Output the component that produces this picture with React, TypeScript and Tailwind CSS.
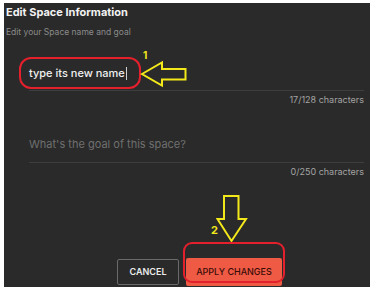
import React from "react";

const LeftArrow = () => (
  <svg width="48" height="28" viewBox="0 0 48 28" className="absolute left-[136px] top-[57px]">
    <path
      d="M2 14 L22 2.5 L22 9 L45.5 9 L45.5 19.5 L22 19.5 L22 25.5 Z"
      fill="none"
      stroke="#f3e81a"
      strokeWidth="2"
      strokeLinejoin="miter"
    />
  </svg>
);

const DownArrow = () => (
  <svg width="32" height="50" viewBox="0 0 32 50" className="absolute left-[212px] top-[191px]">
    <path
      d="M8 2 L22.5 2 L22.5 25 L30 25 L15.5 47 L1.5 25 L8 25 Z"
      fill="none"
      stroke="#f3e81a"
      strokeWidth="2"
      strokeLinejoin="miter"
    />
  </svg>
);

const App = () => {
  return (
    <div className="w-[374px] h-[294px] bg-white pt-[3px] pl-[4px] font-['Inter',sans-serif]">
      <div className="relative w-[366px] h-[284px] bg-[#2a2a2a] flex flex-col">
        <div className="pl-[2px] pt-[1px]">
          <h2 className="text-[11px] leading-[16px] font-bold text-[#f2f2f2]">
            Edit Space Information
          </h2>
          <p className="mt-[6px] text-[8.5px] leading-[12px] text-[#8a8a8a]">
            Edit your Space name and goal
          </p>
        </div>

        <div className="pl-[25px] pr-[6px] flex flex-col">
          <div className="mt-[27px] pb-[9px] border-b border-[#3e3e3e] flex items-center">
            <span className="text-[11px] leading-[16px] font-medium text-[#f0f0f0]">type its new name</span>
            <span className="ml-[1px] w-[1px] h-[13px] bg-[#d0d0d0]" />
          </div>
          <p className="mt-[3px] text-right text-[9px] leading-[12px] text-[#a3a3a3]">
            17/128 characters
          </p>

          <div className="mt-[24px] pb-[8px] border-b border-[#3e3e3e]">
            <span className="text-[11px] leading-[16px] text-[#6f6f6f]">
              What's the goal of this space?
            </span>
          </div>
          <p className="mt-[3px] text-right text-[9px] leading-[12px] text-[#a3a3a3]">
            0/250 characters
          </p>
        </div>

        <div className="mt-[80px] pl-[113px] flex items-center gap-[7px]">
          <button className="w-[62px] h-[26px] border border-[#6a6a6a] rounded-[2px] text-[9px] font-semibold text-[#ececec]">
            CANCEL
          </button>
          <button className="w-[96px] h-[28px] bg-[#ef5a44] rounded-[2px] text-[9px] font-medium text-[#3a0d08]">
            APPLY CHANGES
          </button>
        </div>

        {/* annotations */}
        <div className="absolute left-[15px] top-[54px] w-[122px] h-[32px] border-2 border-[#e3202c] rounded-[12px]" />
        <span className="absolute left-[139px] top-[46px] text-[10px] font-bold text-[#f3e81a] leading-[12px]">1</span>
        <LeftArrow />
        <DownArrow />
        <span className="absolute left-[207px] top-[221px] text-[11px] font-bold text-[#f3e81a] leading-[12px]">2</span>
        <div className="absolute left-[179px] top-[239px] w-[102px] h-[41px] border-2 border-[#e3202c] rounded-[9px]" />
      </div>
    </div>
  );
};

export default App;
